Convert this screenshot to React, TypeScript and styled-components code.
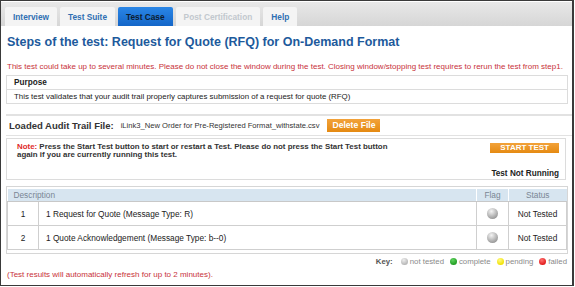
import * as React from 'react';
import styled, { createGlobalStyle } from 'styled-components';

const GlobalStyle = createGlobalStyle`
  html, body {
    margin: 0;
    padding: 0;
    background: #ffffff;
  }
  body {
    font-family: "Liberation Sans", Arial, sans-serif;
    color: #222;
  }
`;

const Frame = styled.div`
  width: 574px;
  height: 286px;
  box-sizing: border-box;
  border: 1px solid #3a3a3a;
  border-right-width: 2px;
  overflow: hidden;
  background: #fff;
`;

const TabBar = styled.div`
  display: flex;
  align-items: flex-end;
  gap: 3px;
  height: 24px;
  margin-top: 1px;
  padding-left: 4px;
  background: linear-gradient(#e8e8e8, #d6d6d6);
`;

const Tab = styled.div<{ $active?: boolean; $disabled?: boolean }>`
  height: 19px;
  padding: 0 8px;
  display: flex;
  align-items: center;
  border-radius: 2px 2px 0 0;
  font-size: 8.3px;
  font-weight: bold;
  background: ${(p) => (p.$active ? 'linear-gradient(#2a86e6, #1466c8)' : '#f4f4f4')};
  color: ${(p) => (p.$active ? '#0c1c30' : p.$disabled ? '#c2c8ce' : '#2f6fb2')};
`;

const Content = styled.div`
  padding: 0 5px;
`;

const Title = styled.h1`
  margin: 8px 0 0 1px;
  height: 16px;
  line-height: 16px;
  font-size: 12.5px;
  font-weight: bold;
  color: #1d5a9c;
`;

const Warning = styled.p`
  margin: 12px 0 0 1px;
  height: 10px;
  line-height: 10px;
  font-size: 8px;
  white-space: nowrap;
  color: #c8323a;
`;

const Box = styled.div`
  border: 1px solid #dcdcdc;
  margin-top: 3px;
  width: 560px;
`;

const BoxHead = styled.div`
  height: 13px;
  line-height: 13px;
  font-size: 8.2px;
  font-weight: bold;
  padding: 0 7px;
  border-bottom: 1px solid #dcdcdc;
`;

const BoxBody = styled.div`
  height: 13px;
  line-height: 13px;
  font-size: 7.9px;
  padding: 0 7px;
`;

const FileRow = styled.div`
  display: flex;
  align-items: center;
  margin-top: 10px;
  width: 560px;
  height: 19px;
  border-top: 2px solid #e2e2e2;
  border-bottom: 1px solid #e2e2e2;
  padding: 0 3px;
`;

const FileLabel = styled.span`
  font-size: 9.5px;
  font-weight: bold;
  color: #333;
  margin-right: 7px;
`;

const FileName = styled.span`
  font-size: 7.6px;
  color: #333;
  margin-right: 8px;
`;

const OrangeButton = styled.button<{ $wide?: boolean }>`
  border: none;
  border-radius: 0;
  font-family: inherit;
  font-weight: bold;
  color: #fff;
  background: linear-gradient(#f2a23a, #e58a12);
  padding: 0 ${(p) => (p.$wide ? '10px' : '5px')};
  height: ${(p) => (p.$wide ? '10px' : '13px')};
  font-size: ${(p) => (p.$wide ? '8px' : '8.6px')};
  line-height: 1;
  cursor: pointer;
`;

const NoteBox = styled.div`
  margin-top: 2px;
  width: 560px;
  height: 42px;
  box-sizing: border-box;
  border: 1px solid #dcdcdc;
  padding: 4px 6px 0 10px;
  display: grid;
  grid-template-columns: 1fr auto;
  grid-template-rows: 22px 1fr;
  align-items: start;
`;

const NoteText = styled.div`
  font-size: 7.9px;
  font-weight: bold;
  color: #333;
  line-height: 7.5px;
`;

const NoteLabel = styled.span`
  color: #e02a2a;
`;

const RunState = styled.div`
  grid-column: 1 / 3;
  justify-self: end;
  font-size: 8.2px;
  font-weight: bold;
  color: #222;
  margin-top: 4px;
`;

const TableWrap = styled.div`
  margin-top: 6px;
  width: 560px;
  border: 1px solid #d6d6d6;
  padding: 2px 0 3px;
`;

const Table = styled.table`
  width: 100%;
  border-collapse: collapse;
  font-size: 8.3px;
`;

const Th = styled.th<{ $align?: string }>`
  background: #d7e5f0;
  color: #7a8694;
  font-weight: normal;
  text-align: ${(p) => p.$align || 'left'};
  height: 12px;
  padding: 0 6px;
  border-left: 1px solid #fff;
  border-bottom: 1px solid #c8c8c8;
  &:first-child {
    border-left: none;
  }
`;

const Td = styled.td<{ $align?: string; $width?: number }>`
  height: 23px;
  padding: 0 7px;
  text-align: ${(p) => p.$align || 'left'};
  width: ${(p) => (p.$width ? `${p.$width}px` : 'auto')};
  border: 1px solid #cfcfcf;
  border-top: none;
  color: #222;
`;

const Ball = styled.span<{ $size: number; $color: string; $light: string }>`
  display: inline-block;
  width: ${(p) => p.$size}px;
  height: ${(p) => p.$size}px;
  border-radius: 50%;
  vertical-align: middle;
  background: radial-gradient(circle at 40% 30%, ${(p) => p.$light}, ${(p) => p.$color} 75%);
`;

const KeyRow = styled.div`
  display: flex;
  justify-content: flex-end;
  align-items: center;
  gap: 3px;
  width: 561px;
  margin-top: 2px;
  height: 11px;
  font-size: 7.8px;
  color: #8a8a8a;
`;

const KeyLabel = styled.span`
  font-weight: bold;
  color: #555;
  margin-right: 2px;
`;

const KeyItem = styled.span`
  display: inline-flex;
  align-items: center;
  gap: 2px;
  margin-left: 3px;
`;

const Footnote = styled.p`
  margin: 3px 0 0 1px;
  font-size: 8px;
  color: #c8323a;
`;

const steps = [
  { n: 1, text: '1 Request for Quote (Message Type: R)' },
  { n: 2, text: '1 Quote Acknowledgement (Message Type: b--0)' },
];

const keys = [
  { label: 'not tested', color: '#b4b4b4', light: '#eeeeee' },
  { label: 'complete', color: '#1f9a1f', light: '#5fd35f' },
  { label: 'pending', color: '#f0e000', light: '#fffa80' },
  { label: 'failed', color: '#e01818', light: '#ff7070' },
];

export default function App() {
  return (
    <Frame>
      <GlobalStyle />
      <TabBar>
        <Tab>Interview</Tab>
        <Tab>Test Suite</Tab>
        <Tab $active>Test Case</Tab>
        <Tab $disabled>Post Certification</Tab>
        <Tab>Help</Tab>
      </TabBar>
      <Content>
        <Title>Steps of the test: Request for Quote (RFQ) for On-Demand Format</Title>
        <Warning>
          This test could take up to several minutes. Please do not close the window during the test. Closing
          window/stopping test requires to rerun the test from step1.
        </Warning>
        <Box>
          <BoxHead>Purpose</BoxHead>
          <BoxBody>This test validates that your audit trail properly captures submission of a request for quote (RFQ)</BoxBody>
        </Box>
        <FileRow>
          <FileLabel>Loaded Audit Trail File:</FileLabel>
          <FileName>iLink3_New Order for Pre-Registered Format_withstate.csv</FileName>
          <OrangeButton>Delete File</OrangeButton>
        </FileRow>
        <NoteBox>
          <NoteText>
            <NoteLabel>Note:</NoteLabel> Press the Start Test button to start or restart a Test. Please do not press the
            Start Test button
            <br />
            again if you are currently running this test.
          </NoteText>
          <OrangeButton $wide>START TEST</OrangeButton>
          <RunState>Test Not Running</RunState>
        </NoteBox>
        <TableWrap>
          <Table>
            <thead>
              <tr>
                <Th colSpan={2}>Description</Th>
                <Th $align="center">Flag</Th>
                <Th $align="center">Status</Th>
              </tr>
            </thead>
            <tbody>
              {steps.map((s) => (
                <tr key={s.n}>
                  <Td $align="center" $width={16}>{s.n}</Td>
                  <Td>{s.text}</Td>
                  <Td $align="center" $width={17}>
                    <Ball $size={11} $color="#9a9a9a" $light="#f4f4f4" />
                  </Td>
                  <Td $align="center" $width={43}>Not Tested</Td>
                </tr>
              ))}
            </tbody>
          </Table>
        </TableWrap>
        <KeyRow>
          <KeyLabel>Key:</KeyLabel>
          {keys.map((k) => (
            <KeyItem key={k.label}>
              <Ball $size={7} $color={k.color} $light={k.light} />
              {k.label}
            </KeyItem>
          ))}
        </KeyRow>
        <Footnote>(Test results will automatically refresh for up to 2 minutes).</Footnote>
      </Content>
    </Frame>
  );
}
